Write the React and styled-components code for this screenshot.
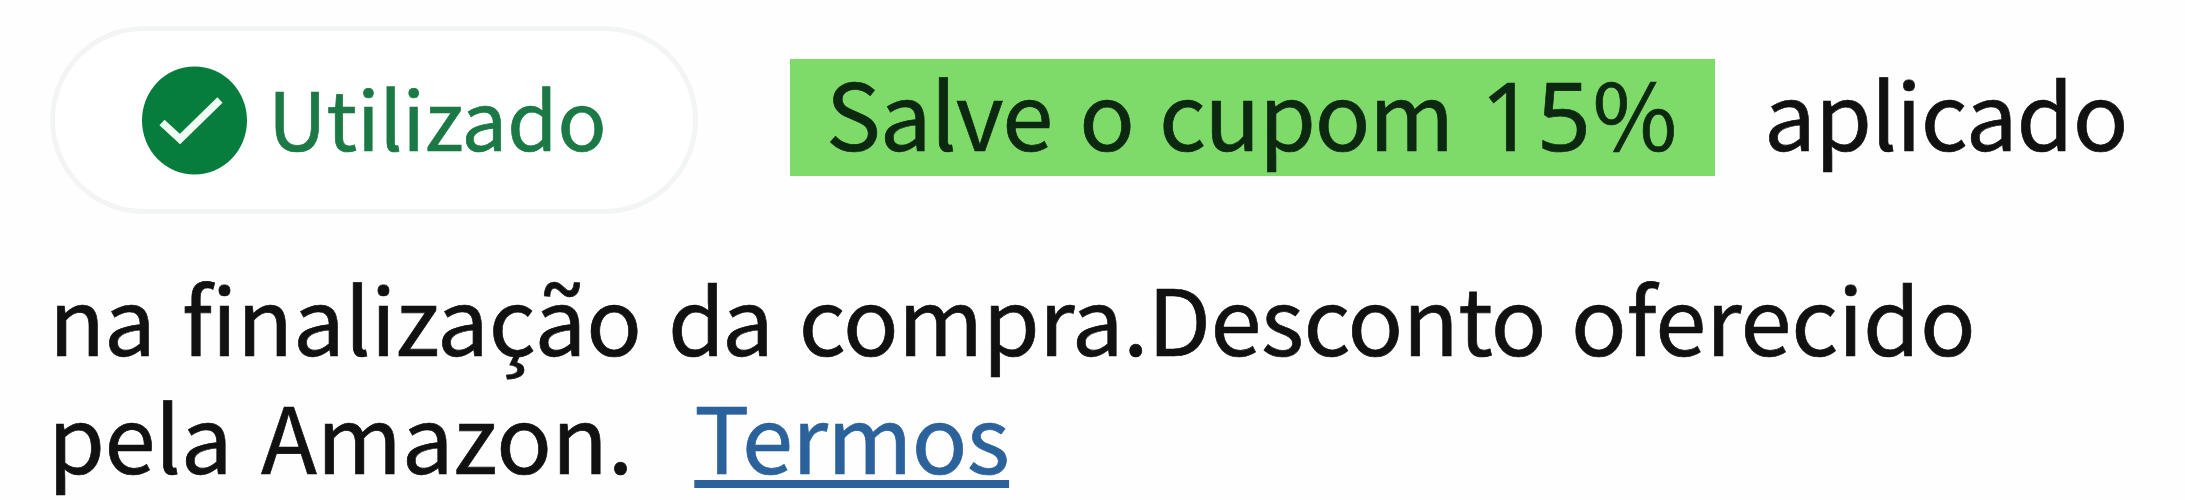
import React from 'react';
import styled, { createGlobalStyle } from 'styled-components';

const line1 = [
    { text: 'Salve', track: -1, gap: 0 },
    { text: 'o', track: 0, gap: 27 },
    { text: 'cupom', track: -1.4, gap: 24 },
];

const line2 = [
    { text: 'na', track: -1, gap: 1 },
    { text: 'finalização', track: -0.1, gap: 27 },
    { text: 'da', track: -3, gap: 26 },
    { text: 'compra.Desconto', track: -0.6, gap: 28 },
    { text: 'oferecido', track: -0.2, gap: 25 },
];

const line3 = [
    { text: 'pela', track: -0.5, gap: 0 },
    { text: 'Amazon.', track: -0.1, gap: 29 },
];

const Words = ({ list }) => list.map(item => (
    <Word key={item.text} $track={item.track} $gap={item.gap}>{item.text}</Word>
));

const App = () => {
    return (
        <>
            <GlobalStyle />
            <Wrap>
                <CouponRow>
                    <Badge>
                        <CheckIcon viewBox="0 0 105 109">
                            <ellipse cx="52.5" cy="54.5" rx="52.5" ry="54" fill="#067d3c" />
                            <path d="M20 56.5L38 73L78 34" fill="none" stroke="#effff3" strokeWidth="7.5" />
                        </CheckIcon>
                        <BadgeText>Utilizado</BadgeText>
                    </Badge>
                    <Coupon>
                        <Words list={line1} />
                        <Word $track={0} $gap={28}><Digits>15</Digits>%</Word>
                    </Coupon>
                    <Applied $track={-0.9} $gap={49}>aplicado</Applied>
                </CouponRow>
                <TextRow>
                    <Words list={line2} />
                </TextRow>
                <TextRow>
                    <Words list={line3} />
                    <Terms href="#" $track={-0.7} $gap={61}>Termos</Terms>
                </TextRow>
            </Wrap>
        </>
    )
}
export default App;


const GlobalStyle = createGlobalStyle`
    body {
        margin: 0;
        background: #fefefe;
    }
`;

const Wrap = styled.div`
    box-sizing: border-box;
    width: 2185px;
    height: 500px;
    padding: 26px 0 0 48px;
    overflow: hidden;
    color: #111;
    font-family: "Noto Sans CJK SC", "Noto Sans", sans-serif;
    font-size: 92px;
    line-height: 118px;
    white-space: nowrap;
    -webkit-text-stroke: 0.7px currentColor;
`;

const CouponRow = styled.div`
    display: flex;
    align-items: flex-start;
    height: 188px;
    margin: 0 0 43px 2px;
`;

const TextRow = styled.div`
    display: flex;
    height: 118px;
`;

//쿠폰 상태 배지
const Badge = styled.div`
    box-sizing: border-box;
    display: flex;
    align-items: center;
    width: 648px;
    height: 188px;
    padding-left: 87px;
    border: 5px solid #f3f4f4;
    border-radius: 94px;
    background: #fff;
`;

const CheckIcon = styled.svg`
    display: block;
    width: 105px;
    height: 109px;
`;

const BadgeText = styled.span`
    margin: 0 0 8px 21px;
    color: #1b7945;
    font-size: 81px;
    letter-spacing: 0.1px;
    line-height: 82px;
`;

const Coupon = styled.div`
    box-sizing: border-box;
    display: flex;
    width: 925px;
    height: 117px;
    margin: 33px 0 0 92px;
    padding-left: 36px;
    background: #7fdb69;
    color: #0c2810;
    line-height: 103px;
`;

const Word = styled.span`
    margin-left: ${props => props.$gap}px;
    letter-spacing: ${props => props.$track}px;
`;

const Digits = styled.span`
    font-family: "Noto Sans", sans-serif;
    font-size: 95px;
    letter-spacing: 1.5px;
    line-height: 1;
`;

const Applied = styled(Word)`
    margin-top: 33px;
    line-height: 103px;
`;

const Terms = styled(Word).attrs({ as: 'a' })`
    color: #2b629b;
    text-decoration: underline;
    text-decoration-thickness: 8px;
    text-underline-offset: 6px;
    text-decoration-skip-ink: none;
`;
